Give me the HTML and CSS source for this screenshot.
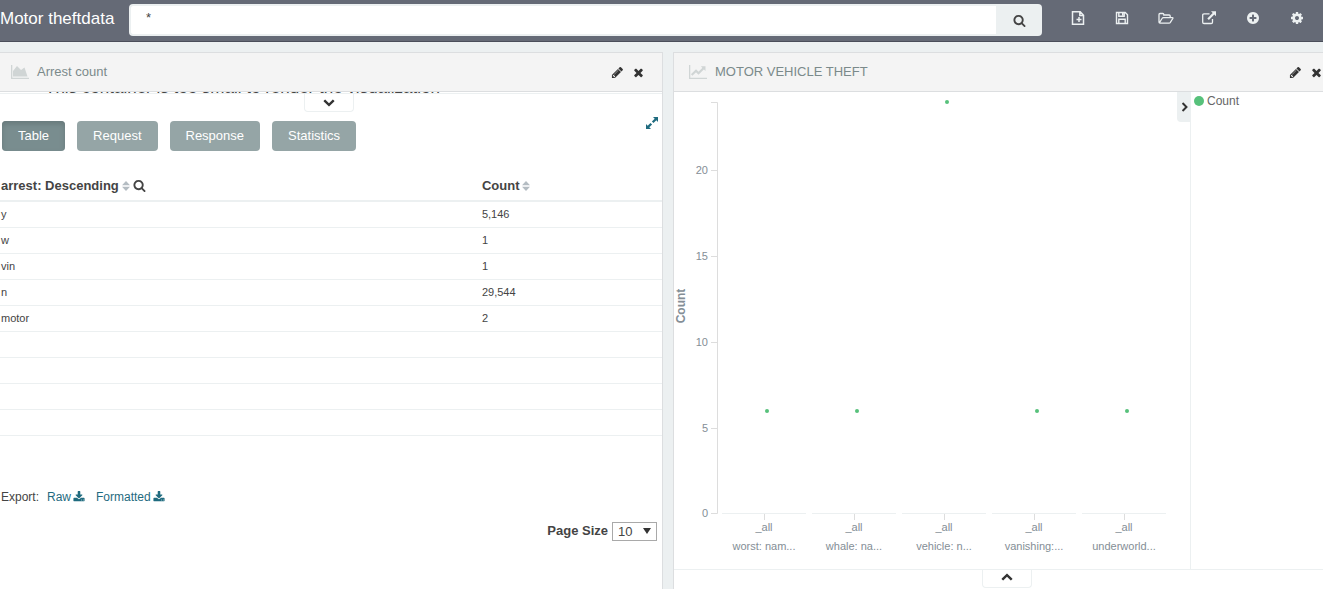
FILE: index.html
```html
<!DOCTYPE html>
<html lang="en">
<head>
<meta charset="utf-8">
<title>Motor theftdata</title>
<link rel="stylesheet" href="styles.css">
</head>
<body>
<svg class="defs" aria-hidden="true">
  <symbol id="search" viewBox="0 0 1792 1792"><path d="M1216 832q0-185-131.500-316.500t-316.500-131.500-316.500 131.500-131.500 316.500 131.500 316.500 316.500 131.500 316.500-131.500 131.500-316.500zm512 832q0 52-38 90t-90 38q-54 0-90-38l-343-342q-179 124-399 124-143 0-273.500-55.500t-225-150-150-225-55.500-273.500 55.500-273.500 150-225 225-150 273.500-55.500 273.500 55.500 225 150 150 225 55.500 273.500q0 220-124 399l343 343q37 37 37 90z"/></symbol>
  <symbol id="pencil" viewBox="0 0 1792 1792"><path d="M491 1536l91-91-235-235-91 91v107h128v128h107zm523-928q0-22-22-22-10 0-17 7l-542 542q-7 7-7 17 0 22 22 22 10 0 17-7l542-542q7-7 7-17zm-54-192l416 416-832 832h-416v-416zm683 96q0 53-37 90l-166 166-416-416 166-165q36-38 90-38 53 0 91 38l235 234q37 39 37 91z"/></symbol>
  <symbol id="close" viewBox="0 0 1792 1792"><path d="M1490 1322q0 40-28 68l-136 136q-28 28-68 28t-68-28l-294-294-294 294q-28 28-68 28t-68-28l-136-136q-28-28-28-68t28-68l294-294-294-294q-28-28-28-68t28-68l136-136q28-28 68-28t68 28l294 294 294-294q28-28 68-28t68 28l136 136q28 28 28 68t-28 68l-294 294 294 294q28 28 28 68z"/></symbol>
  <symbol id="chevron" viewBox="0 0 1792 1792"><path d="M1683 808l-742 741q-19 19-45 19t-45-19l-742-741q-19-19-19-45.500t19-45.500l166-165q19-19 45-19t45 19l531 531 531-531q19-19 45-19t45 19l166 165q19 19 19 45.500t-19 45.500z"/></symbol>
  <symbol id="plus" viewBox="0 0 1792 1792"><path d="M1344 960v-128q0-26-19-45t-45-19h-256v-256q0-26-19-45t-45-19h-128q-26 0-45 19t-19 45v256h-256q-26 0-45 19t-19 45v128q0 26 19 45t45 19h256v256q0 26 19 45t45 19h128q26 0 45-19t19-45v-256h256q26 0 45-19t19-45zm320-64q0 209-103 385.500t-279.500 279.500-385.500 103-385.500-103-279.500-279.500-103-385.500 103-385.500 279.500-279.500 385.500-103 385.500 103 279.500 279.500 103 385.500z"/></symbol>
  <symbol id="cog" viewBox="0 0 1792 1792"><path d="M1152 896q0-106-75-181t-181-75-181 75-75 181 75 181 181 75 181-75 75-181zm512-109v222q0 12-8 23t-20 13l-185 28q-19 54-39 91 35 50 107 138 10 12 10 25t-9 23q-27 37-99 108t-94 71q-12 0-26-9l-138-108q-44 23-91 38-16 136-29 186-7 28-36 28h-222q-14 0-24.500-8.500t-11.500-21.500l-28-184q-49-16-90-37l-141 107q-10 9-25 9-14 0-25-11-126-114-165-168-7-10-7-23 0-12 8-23 15-21 51-66.500t54-70.500q-27-50-41-99l-183-27q-13-2-21-12.500t-8-23.500v-222q0-12 8-23t19-13l186-28q14-46 39-92-40-57-107-138-10-12-10-24 0-10 9-23 26-36 98.500-107.500t94.500-71.500q13 0 26 10l138 107q44-23 91-38 16-136 29-186 7-28 36-28h222q14 0 24.500 8.500t11.500 21.500l28 184q49 16 90 37l142-107q9-9 24-9 13 0 25 10 129 119 165 170 7 8 7 22 0 12-8 23-15 21-51 66.500t-54 70.500q26 50 41 98l183 28q13 2 21 12.500t8 23.500z"/></symbol>
  <symbol id="download" viewBox="0 0 1792 1792"><path d="M1344 1344q0-26-19-45t-45-19-45 19-19 45 19 45 45 19 45-19 19-45zm256 0q0-26-19-45t-45-19-45 19-19 45 19 45 45 19 45-19 19-45zm128-224v320q0 40-28 68t-68 28h-1472q-40 0-68-28t-28-68v-320q0-40 28-68t68-28h465l135 136q58 56 136 56t136-56l136-136h464q40 0 68 28t28 68zm-325-569q17 41-14 70l-448 448q-18 19-45 19t-45-19l-448-448q-31-29-14-70 17-39 59-39h256v-448q0-26 19-45t45-19h256q26 0 45 19t19 45v448h256q42 0 59 39z"/></symbol>
  <symbol id="newfile" viewBox="0 0 14 14"><path d="M1.500 .8h7.700l3.300 3.400v9h-11zM8.800.8v3.700h3.700M8 6v5M5.500 8.500h5" fill="none" stroke="currentColor" stroke-width="1.500"/></symbol>
  <symbol id="save" viewBox="0 0 14 14"><path d="M1.500 1.500h8.700l2.300 2.300v8.700h-11zM3.800 12.500V8.300h6.400v4.200M3.800 1.500v3.700h5.400V1.500" fill="none" stroke="currentColor" stroke-width="1.400"/><path d="M7 2h1.600v2.700H7z"/></symbol>
  <symbol id="folder" viewBox="0 0 16 14"><path d="M1 11.500v-8q0-1 1-1h2.800q1 0 1 1v.5h5.400q1 0 1 1v1.500M1.300 12 4 7.500q.5-.9 1.500-.9h8.800q1 0 .5.900l-2.300 3.700q-.5.900-1.500.9H2q-1 0-1-1" fill="none" stroke="currentColor" stroke-width="1.300"/></symbol>
  <symbol id="share" viewBox="0 0 14 14"><path d="M7.500 2.800H2q-1.300 0-1.300 1.300v7.100q0 1.300 1.300 1.300h7.200q1.300 0 1.300-1.300V8" fill="none" stroke="currentColor" stroke-width="1.300"/><path d="M9 .3h5v5l-1.700-1.700-5.400 5.400-1.600-1.600 5.400-5.400z"/></symbol>
  <symbol id="area" viewBox="0 0 18 14"><path d="M0 0h1.300v12.700H18V14H0zM2 11.500V6l4-5 4 4 3.500-2.500L16.500 11.500z"/></symbol>
  <symbol id="line" viewBox="0 0 18 14"><path d="M0 0h1.300v12.700H18V14H0z"/><path d="M2.700 10 7 5.800l2.500 2.500 5-5" fill="none" stroke="currentColor" stroke-width="2.200"/><path d="M11.800 1.300H16.500V6z"/></symbol>
  <symbol id="sort" viewBox="0 0 8 10"><path d="M0 4.300 4 0l4 4.300zM0 5.700h8L4 10z"/></symbol>
  <symbol id="expand" viewBox="0 0 12 12"><path d="M7 0h5v5l-1.700-1.700L7.500 6.100l-1.600-1.600 2.800-2.800zM0 7l1.700 1.700 2.800-2.800 1.600 1.600-2.800 2.800L5 12H0z"/></symbol>
</svg>

<header class="topbar">
  <h1 class="title">Motor theftdata</h1>
  <form class="query">
    <input class="query-input" type="text" value="*" aria-label="Search query">
    <button class="query-button" type="button" aria-label="Search"><svg class="icon"><use href="#search"/></svg></button>
  </form>
  <nav class="tools">
    <button class="tool" type="button" aria-label="New"><svg class="icon tool-icon"><use href="#newfile"/></svg></button>
    <button class="tool" type="button" aria-label="Save"><svg class="icon tool-icon"><use href="#save"/></svg></button>
    <button class="tool" type="button" aria-label="Open"><svg class="icon tool-icon wide"><use href="#folder"/></svg></button>
    <button class="tool" type="button" aria-label="Share"><svg class="icon tool-icon"><use href="#share"/></svg></button>
    <button class="tool" type="button" aria-label="Add"><svg class="icon tool-icon"><use href="#plus"/></svg></button>
    <button class="tool" type="button" aria-label="Settings"><svg class="icon tool-icon"><use href="#cog"/></svg></button>
  </nav>
</header>

<main class="dashboard">
  <section class="panel panel-left">
    <header class="panel-head">
      <svg class="panel-icon"><use href="#area"/></svg>
      <h2 class="panel-title">Arrest count</h2>
      <button class="panel-action" type="button" aria-label="Edit"><svg class="icon"><use href="#pencil"/></svg></button>
      <button class="panel-action" type="button" aria-label="Remove"><svg class="icon"><use href="#close"/></svg></button>
    </header>
    <div class="notice"><p class="notice-text">This container is too small to render the visualization</p></div>
    <div class="spy">
      <button class="drawer" type="button" aria-label="Collapse"><svg class="icon small"><use href="#chevron"/></svg></button>
      <div class="modes">
        <button class="mode active" type="button">Table</button>
        <button class="mode" type="button">Request</button>
        <button class="mode" type="button">Response</button>
        <button class="mode" type="button">Statistics</button>
        <button class="expand" type="button" aria-label="Expand"><svg class="icon small"><use href="#expand"/></svg></button>
      </div>
      <table class="data">
        <colgroup><col class="term"><col></colgroup>
        <thead>
          <tr>
            <th><span class="th">arrest: Descending <svg class="sort"><use href="#sort"/></svg><svg class="icon"><use href="#search"/></svg></span></th>
            <th><span class="th">Count <svg class="sort"><use href="#sort"/></svg></span></th>
          </tr>
        </thead>
        <tbody>
          <tr><td>y</td><td>5,146</td></tr>
          <tr><td>w</td><td>1</td></tr>
          <tr><td>vin</td><td>1</td></tr>
          <tr><td>n</td><td>29,544</td></tr>
          <tr><td>motor</td><td>2</td></tr>
          <tr><td></td><td></td></tr>
          <tr><td></td><td></td></tr>
          <tr><td></td><td></td></tr>
          <tr><td></td><td></td></tr>
        </tbody>
      </table>
      <div class="export">
        <span>Export:</span>
        <a class="export-link" href="#">Raw <svg class="icon small"><use href="#download"/></svg></a>
        <a class="export-link" href="#">Formatted <svg class="icon small"><use href="#download"/></svg></a>
      </div>
      <div class="paging">
        <label class="paging-label" for="size">Page Size</label>
        <span class="select-wrap">
          <select class="select" id="size"><option>10</option><option>25</option><option>100</option></select>
          <span class="caret"></span>
        </span>
      </div>
    </div>
  </section>

  <section class="panel panel-right">
    <header class="panel-head">
      <svg class="panel-icon"><use href="#line"/></svg>
      <h2 class="panel-title">MOTOR VEHICLE THEFT</h2>
      <button class="panel-action" type="button" aria-label="Edit"><svg class="icon"><use href="#pencil"/></svg></button>
      <button class="panel-action" type="button" aria-label="Remove"><svg class="icon"><use href="#close"/></svg></button>
    </header>
    <div class="vis">
      <svg class="chart" viewBox="0 0 503 477" role="img" aria-label="Count per term">
        <path class="axis" d="M37 10.500h6.500v411H37M37 78.500h6M37 164.500h6M37 250.500h6M37 336.500h6"/>
        <path class="base" d="M48 421.500h84M138 421.500h84M228 421.500h84M318 421.500h84M408 421.500h84"/>
        <path class="axis" d="M90.500 422v6M180.500 422v6M270.500 422v6M360.500 422v6M450.500 422v6"/>
        <g class="ticks" text-anchor="end">
          <text x="34" y="82">20</text><text x="34" y="168">15</text><text x="34" y="254">10</text><text x="34" y="340">5</text><text x="34" y="425">0</text>
        </g>
        <g class="ticks" text-anchor="middle">
          <text x="90" y="439">_all</text><text x="180" y="439">_all</text><text x="270" y="439">_all</text><text x="360" y="439">_all</text><text x="450" y="439">_all</text>
          <text x="90" y="458">worst: nam...</text><text x="180" y="458">whale: na...</text><text x="270" y="458">vehicle: n...</text><text x="360" y="458">vanishing:...</text><text x="450" y="458">underworld...</text>
        </g>
        <text class="axis-title" text-anchor="middle" transform="translate(11 214) rotate(-90)">Count</text>
        <g class="dots"><circle cx="93" cy="319" r="2"/><circle cx="183" cy="319" r="2"/><circle cx="273" cy="10" r="2"/><circle cx="363" cy="319" r="2"/><circle cx="453" cy="319" r="2"/></g>
      </svg>
      <button class="legend-toggle" type="button" aria-label="Toggle legend"><svg class="icon tiny right"><use href="#chevron"/></svg></button>
      <div class="legend"><span class="legend-dot"></span>Count</div>
    </div>
    <div class="drawer-row"><button class="drawer" type="button" aria-label="Expand details"><svg class="icon small up"><use href="#chevron"/></svg></button></div>
  </section>
</main>
</body>
</html>
```

FILE: styles.css
```css
* { box-sizing: border-box; }
body {
  margin: 0;
  min-height: 100vh;
  display: flex;
  flex-direction: column;
  overflow-x: hidden;
  background: #ecf0f1;
  color: #444;
  font: 13px/18px "Liberation Sans", Arial, sans-serif;
}
button { border: 0; padding: 0; background: none; color: inherit; font: inherit; cursor: pointer; }
h1, h2, p { margin: 0; font-weight: normal; }
.defs { position: absolute; width: 0; height: 0; }
.icon { display: block; width: 13px; height: 13px; fill: currentColor; flex: none; }
.small { width: 12px; height: 12px; }
.tiny { width: 10px; height: 10px; }
.up { transform: rotate(180deg); }
.right { transform: rotate(-90deg); }

.topbar {
  display: flex;
  align-items: flex-start;
  height: 42px;
  background: #656a76;
  border-bottom: 1px solid #4a4e5a;
}
.title { width: 129px; padding-top: 8px; color: #fff; font-size: 17px; line-height: 22px; white-space: nowrap; }
.query { display: flex; flex: 1; height: 32px; margin-top: 4px; }
.query-input {
  flex: 1;
  min-width: 0;
  padding: 0 15px 4px;
  border: 2px solid #ecf0f1;
  border-right: 0;
  border-radius: 4px 0 0 4px;
  background: #fff;
  color: #444;
  font: inherit;
}
.query-button { display: grid; place-items: center; width: 46px; border-radius: 0 4px 4px 0; background: #ecf0f1; }
.tools { display: flex; justify-content: space-between; width: 281px; padding: 11px 17px 0 27px; }
.tool { display: grid; place-items: center; width: 18px; color: #ecf0f1; }
.tool-icon { width: 14px; height: 14px; }
.wide { width: 16px; }

.dashboard { display: grid; grid-template-columns: 663fr 650fr; gap: 10px; flex: 1; padding-top: 10px; }
.panel { display: flex; flex-direction: column; min-width: 0; border: 1px solid #dcdee0; border-width: 1px 0 0 1px; background: #fff; }
.panel-left { border-width: 1px 1px 0 0; }
.panel-head {
  display: flex;
  align-items: center;
  height: 39px;
  padding: 0 17px 0 11px;
  border-bottom: 1px solid #dcdee0;
  background: #f4f4f4;
}
.panel-right .panel-head { padding: 0 0 0 15px; }
.panel-icon { width: 18px; height: 14px; color: #d0d5d5; fill: currentColor; }
.panel-title { flex: 1; padding-left: 8px; color: #7b8a8b; font-size: 13px; }
.panel-action { display: grid; place-items: center; width: 13px; margin-left: 8px; color: #333; }

.notice { display: flex; align-items: flex-end; height: 1px; padding-left: 45px; overflow: hidden; }
.notice-text { font-size: 17px; line-height: 10px; white-space: nowrap; }
.spy { border-top: 1px solid #ecf0f1; }
.drawer { display: grid; justify-items: center; width: 50px; height: 18px; margin: 0 auto; padding-top: 2px; border: 1px solid #ecf0f1; border-top: 0; border-radius: 0 0 4px 4px; color: #333; }
.drawer-row { padding-left: 16px; }
.spy > .drawer { margin-right: calc(50% - 23px); }
.modes { display: flex; align-items: flex-start; gap: 12px; padding: 9px 4px 0 2px; }
.mode { height: 30px; padding: 0 16px; border-radius: 4px; background: #95a5a6; color: #fff; }
.active { background: #798d8f; box-shadow: inset 0 3px 5px #687a7c; }
.expand { height: 12px; margin: -4px 0 0 auto; color: #1f6b7f; }

.data { width: 100%; margin-top: 19px; border-collapse: collapse; table-layout: fixed; }
.data th { height: 31px; padding: 1px 0 0; border-bottom: 2px solid #ecf0f1; text-align: left; }
.term { width: 72.8%; }
.th { display: flex; align-items: center; gap: 3px; padding-left: 1px; }
.data th:last-child .th { padding-left: 0; }
.sort { width: 8px; height: 10px; fill: #b4bcc2; }
.data td { height: 26px; padding: 0 0 0 1px; border-bottom: 1px solid #ecf0f1; font-size: 11px; line-height: 16px; }
.data td:last-child { padding-left: 0; }
.export { display: flex; gap: 8px; padding: 52px 0 0 1px; font-size: 12px; }
.export-link { display: flex; align-items: center; gap: 2px; margin-right: 3px; color: #1f6b7f; text-decoration: none; }
.paging { display: flex; justify-content: flex-end; align-items: center; gap: 4px; padding: 16px 5px 0 0; }
.paging-label { font-weight: bold; }
.select-wrap { display: grid; align-items: center; width: 45px; }
.select { grid-area: 1 / 1; height: 19px; padding: 0 5px; border: 1px solid #a9a9a9; border-radius: 0; background: #fff; color: #444; font: inherit; appearance: none; }
.caret { grid-area: 1 / 1; justify-self: end; margin-right: 6px; border: solid transparent; border-width: 6px 4px 0; border-top-color: #333; pointer-events: none; }

.vis { display: grid; grid-template-columns: 503fr 13px 133fr; align-items: start; border-bottom: 1px solid #ecf0f1; }
.chart { display: block; width: 100%; }
.legend-toggle { display: grid; place-items: center; height: 30px; background: #ecf0f1; border-radius: 0 0 0 4px; color: #333; }
.legend { display: flex; align-self: stretch; align-items: flex-start; gap: 3px; border-left: 1px solid #ecf0f1; padding-left: 3px; font-size: 12px; color: #666; }
.legend-dot { width: 10px; height: 10px; margin-top: 4px; border-radius: 50%; background: #57c17b; }
.axis { fill: none; stroke: #ddd; }
.base { fill: none; stroke: #ecf0f1; }
.ticks { fill: #848e96; font-size: 11px; }
.axis-title { fill: #848e96; font-size: 12px; font-weight: bold; }
.dots { fill: #57c17b; }
```
